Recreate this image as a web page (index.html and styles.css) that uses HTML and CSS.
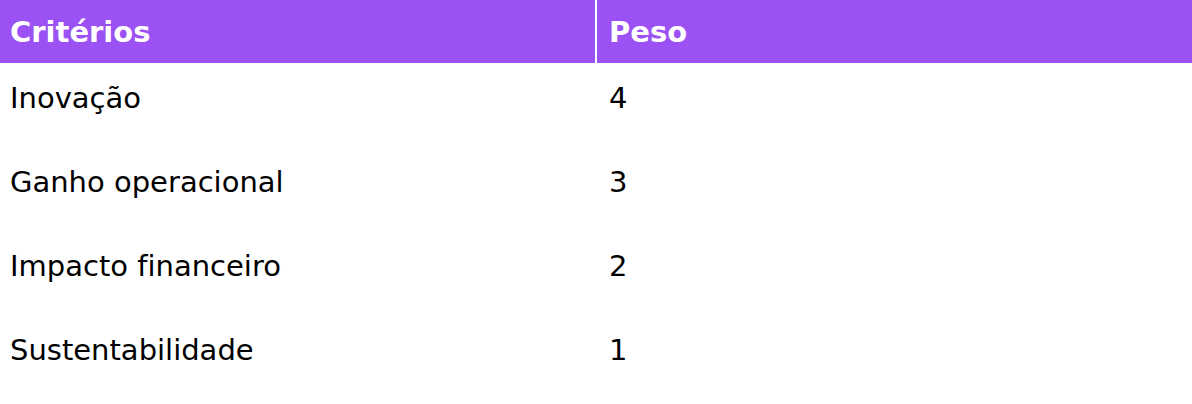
FILE: index.html
```html
<!DOCTYPE html>
<html lang="pt">
<head>
<meta charset="utf-8">
<link rel="stylesheet" href="styles.css">
</head>
<body>
<div class="table">
  <div class="row head">
    <div class="cell c1">Critérios</div>
    <div class="cell c2">Peso</div>
  </div>
  <div class="row">
    <div class="cell c1">Inovação</div>
    <div class="cell c2">4</div>
  </div>
  <div class="row">
    <div class="cell c1">Ganho operacional</div>
    <div class="cell c2">3</div>
  </div>
  <div class="row">
    <div class="cell c1">Impacto financeiro</div>
    <div class="cell c2">2</div>
  </div>
  <div class="row">
    <div class="cell c1">Sustentabilidade</div>
    <div class="cell c2">1</div>
  </div>
</div>
</body>
</html>
```
FILE: styles.css
```css
html, body {
  margin: 0;
  padding: 0;
  background: #ffffff;
}
body {
  font-family: "DejaVu Sans", Verdana, sans-serif;
  font-size: 29px;
  font-variant-ligatures: none;
  color: #000000;
}
.table {
  display: flex;
  flex-direction: column;
  width: 1192px;
}
.row {
  display: grid;
  grid-template-columns: 595px 1fr;
  column-gap: 2px;
  height: 84px;
  box-sizing: border-box;
}
.row .cell {
  padding-top: 19px;
  line-height: 33.5px;
}
.cell.c1 {
  padding-left: 10px;
}
.cell.c2 {
  padding-left: 12px;
}
.row.head {
  height: 63px;
}
.row.head .cell {
  background: #9b51f4;
  color: #ffffff;
  font-weight: bold;
  padding-top: 2px;
  box-sizing: border-box;
  display: flex;
  align-items: center;
}
```
